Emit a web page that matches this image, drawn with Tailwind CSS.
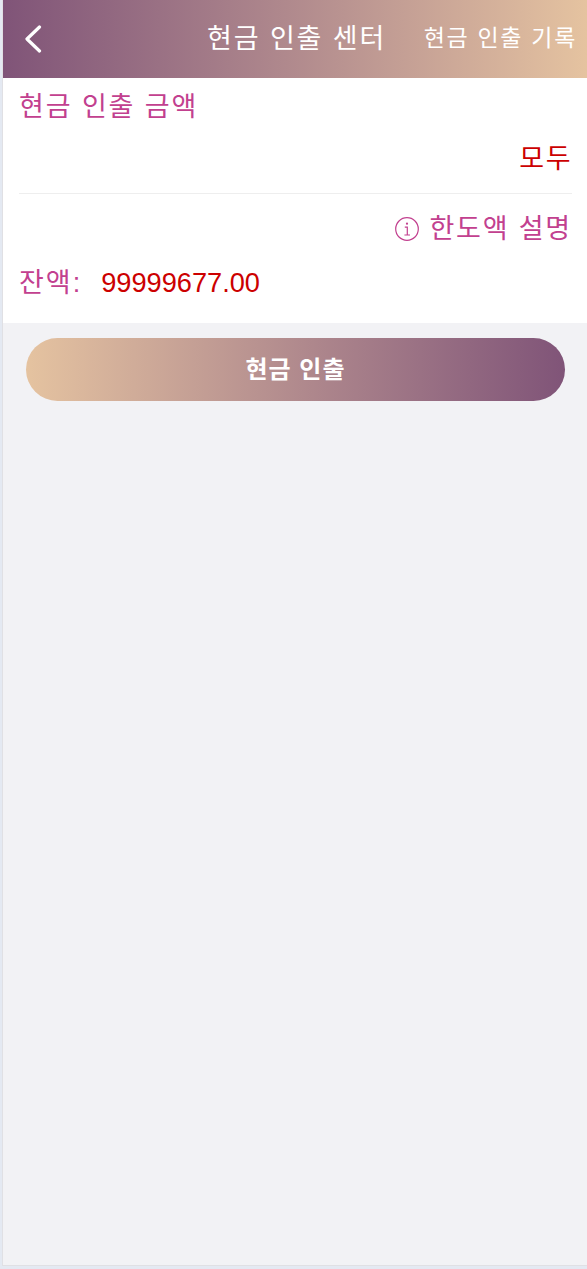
<!doctype html>
<html lang="ko"><head><meta charset="utf-8"><script src="https://cdn.jsdelivr.net/npm/@tailwindcss/browser@4"></script></head>
<body class="bg-[#e4e9f2] font-['Liberation_Sans','Noto_Sans_CJK_KR',sans-serif]">
<div class="ml-[2px] h-[1266px] w-[585px] flex flex-col bg-[#f2f2f5] border-b border-l border-[#e0e0e4] overflow-hidden">
  <header class="relative h-[78px] shrink-0 flex items-center justify-between bg-linear-to-r from-[#805478] to-[#e5c3a0] text-white">
    <svg class="ml-[21px] w-[20px] h-[28px]" viewBox="0 0 20 28" fill="none" stroke="white" stroke-width="3.2" stroke-linecap="round" stroke-linejoin="round"><path d="M15.5 2 L3 14 L15.5 26"/></svg>
    <h1 class="absolute left-[204px] top-[20px] text-[27px] leading-[38px] font-normal tracking-[1.9px]">현금 인출 센터</h1>
    <span class="mr-[10px] -mt-[2px] text-[23px] leading-[36px] tracking-[1.7px]">현금 인출 기록</span>
  </header>
  <section class="h-[245px] shrink-0 bg-white pl-[16px] pr-[15px]">
    <div class="h-[54px] text-[27px] leading-[58px] text-[#c2408f] tracking-[1.9px]">현금 인출 금액</div>
    <div class="h-[62px] border-b border-[#eeeeee] flex items-start justify-end text-[27px] leading-[54px] text-[#cc0000] tracking-[1.5px]">모두</div>
    <div class="h-[70px] flex items-center justify-end gap-[10px] text-[27px] text-[#c2408f]">
      <svg class="w-[24px] h-[24px]" viewBox="0 0 24 24" fill="none" stroke="#c2408f" stroke-width="1.2"><circle cx="12" cy="12" r="11.3"/><circle cx="12" cy="6.7" r="1.1" fill="#c2408f" stroke="none"/><path d="M9.8 10.2 H12.3 V17.8 M9.4 18 H15"/></svg>
      <span class="tracking-[1.8px]">한도액 설명</span>
    </div>
    <div class="flex items-center h-[40px] text-[27px] -mt-[1px]"><span class="text-[#c2408f] tracking-[2px]">잔액:</span><span class="ml-[19px] text-[#cc0000] text-[27.2px]">99999677.00</span></div>
  </section>
  <button class="ml-[23px] mt-[15px] h-[63px] w-[539px] rounded-full bg-linear-to-r from-[#e5c3a0] to-[#805478] text-white text-[24px] font-bold tracking-[1px]">현금 인출</button>
</div>
</body></html>
